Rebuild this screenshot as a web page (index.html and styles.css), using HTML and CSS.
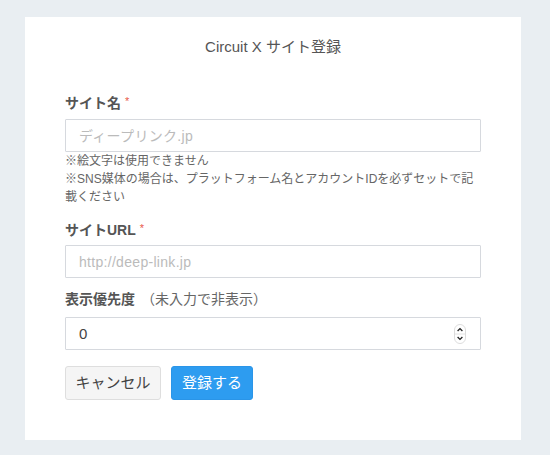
FILE: index.html
```html
<!DOCTYPE html>
<html lang="ja">
<head>
<meta charset="utf-8">
<title>Circuit X サイト登録</title>
<link rel="stylesheet" href="styles.css">
</head>
<body>
<form class="card">
  <h1 class="title">Circuit X サイト登録</h1>

  <div class="group group-name">
    <label class="label">サイト名<span class="req">*</span></label>
    <input class="input" type="text" placeholder="ディープリンク.jp">
    <p class="help">※絵文字は使用できません<br>※SNS媒体の場合は、プラットフォーム名とアカウントIDを必ずセットで記<br>載ください</p>
  </div>

  <div class="group group-url">
    <label class="label">サイトURL<span class="req">*</span></label>
    <input class="input" type="text" placeholder="http://deep-link.jp">
  </div>

  <div class="group group-priority">
    <label class="label">表示優先度<span class="note">（未入力で非表示）</span></label>
    <div class="number-field">
      <input class="number-input" type="text" value="0">
      <svg class="spinner" width="12" height="20" viewBox="0 0 12 20" aria-hidden="true">
        <rect x="0.5" y="0.5" width="11" height="19" rx="5.5" fill="#fff" stroke="#dcdcdc"/>
        <line x1="1" y1="10" x2="11" y2="10" stroke="#e2e2e2"/>
        <path d="M3.6 7 L6 4.6 L8.4 7" fill="none" stroke="#222" stroke-width="1.3"/>
        <path d="M3.6 13 L6 15.4 L8.4 13" fill="none" stroke="#222" stroke-width="1.3"/>
      </svg>
    </div>
  </div>

  <div class="actions">
    <button type="button" class="btn btn-cancel">キャンセル</button>
    <button type="button" class="btn btn-primary">登録する</button>
  </div>
</form>
</body>
</html>
```

FILE: styles.css
```css
html, body {
  margin: 0;
  padding: 0;
}

body {
  background: #e9eef2;
  font-family: "Liberation Sans", "Noto Sans CJK JP", sans-serif;
  color: #555;
  min-height: 455px;
  padding-top: 17px;
  box-sizing: border-box;
}

.card {
  width: 416px;
  margin-left: 25px;
  background: #fff;
  padding: 20px 40px 40px;
  display: flex;
  flex-direction: column;
}

.title {
  margin: 0 0 36px;
  height: 20px;
  font-size: 15px;
  line-height: 20px;
  font-weight: normal;
  color: #555;
  text-align: center;
}

.group {
  display: flex;
  flex-direction: column;
}

.label {
  display: block;
  height: 20px;
  font-size: 14px;
  line-height: 20px;
  font-weight: bold;
  color: #555;
  margin-bottom: 6px;
}

.req {
  color: #e8594a;
  font-size: 11px;
  line-height: 0;
  font-weight: normal;
  margin-left: 4px;
  vertical-align: 3px;
}

.note {
  font-weight: normal;
  margin-left: 6px;
  color: #666;
}

.input,
.number-field {
  box-sizing: border-box;
  width: 416px;
  height: 33px;
  border: 1px solid #d6d9de;
  border-radius: 1px;
  background: #fff;
}

.input {
  padding: 0 13px;
  font-family: "Liberation Sans", "Noto Sans CJK JP", sans-serif;
  font-size: 14px;
  color: #555;
  outline: none;
}

.input::placeholder {
  color: #bbb;
  letter-spacing: 0.3px;
}

.help {
  margin: 0;
  height: 54px;
  font-size: 12px;
  line-height: 18px;
  color: #666;
}

.group-name {
  margin-bottom: 14px;
}

.group-url .label {
  margin-bottom: 5px;
}

.group-url {
  margin-bottom: 11px;
}

.group-priority .label {
  margin-bottom: 8px;
}

.group-priority {
  margin-bottom: 16px;
}

.number-field {
  display: flex;
  align-items: center;
  padding: 0 14px 0 13px;
}

.number-input {
  flex: 1;
  border: none;
  outline: none;
  padding: 0;
  font-family: "Liberation Sans", "Noto Sans CJK JP", sans-serif;
  font-size: 15px;
  color: #444;
  background: transparent;
}

.spinner {
  display: block;
  flex: none;
}

.actions {
  display: flex;
  gap: 10px;
}

.btn {
  height: 34px;
  border-radius: 3px;
  font-family: "Liberation Sans", "Noto Sans CJK JP", sans-serif;
  font-size: 15px;
  line-height: 20px;
  padding: 0;
  cursor: pointer;
}

.btn-cancel {
  width: 96px;
  background: #f5f5f5;
  border: 1px solid #dedede;
  color: #444;
}

.btn-primary {
  width: 82px;
  background: #2d9cf0;
  border: 1px solid #2a95e8;
  color: #fff;
}
```
